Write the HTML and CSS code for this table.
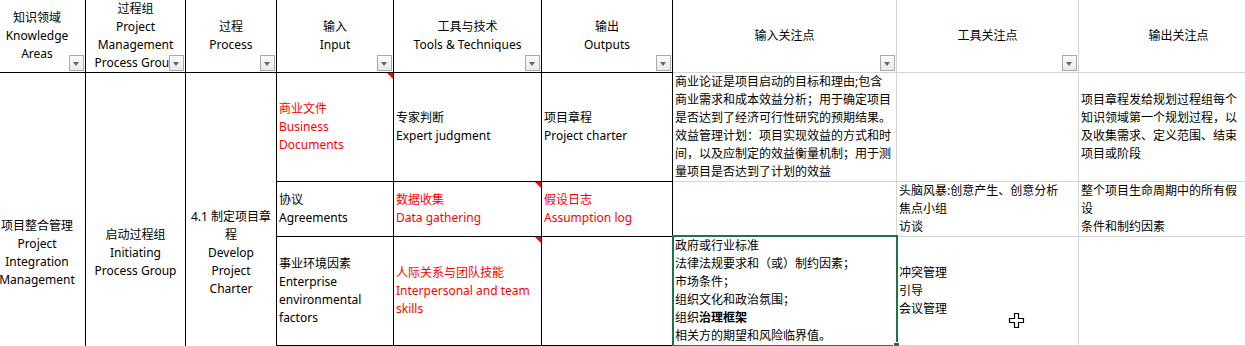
FILE: index.html
```html
<!DOCTYPE html>
<html lang="zh-CN">
<head>
<meta charset="utf-8">
<title>项目整合管理</title>
<link rel="stylesheet" href="styles.css">
</head>
<body>
<div class="sheet">
  <div class="cell head dark"><div class="txt">知识领域<br>Knowledge<br>Areas</div><span class="filter"></span></div>
  <div class="cell head dark"><div class="txt">过程组<br>Project<br>Management<br>Process Group</div><span class="filter"></span></div>
  <div class="cell head dark"><div class="txt">过程<br>Process</div><span class="filter"></span></div>
  <div class="cell head dark"><div class="txt">输入<br>Input</div><span class="filter"></span></div>
  <div class="cell head dark"><div class="txt">工具与技术<br>Tools &amp; Techniques</div><span class="filter"></span></div>
  <div class="cell head dark"><div class="txt">输出<br>Outputs</div><span class="filter"></span></div>
  <div class="cell head light"><div class="txt">输入关注点</div><span class="filter"></span></div>
  <div class="cell head light"><div class="txt">工具关注点</div><span class="filter"></span></div>
  <div class="cell head light"><div class="txt">输出关注点</div></div>

  <div class="cell merged"><div class="txt">项目整合管理<br>Project<br>Integration<br>Management</div></div>
  <div class="cell merged"><div class="txt">启动过程组<br>Initiating<br>Process Group</div></div>
  <div class="cell merged"><div class="txt">4.1 制定项目章<br>程<br>Develop<br>Project<br>Charter</div></div>

  <div class="cell body dark red note"><div class="txt">商业文件<br>Business<br>Documents</div></div>
  <div class="cell body dark"><div class="txt">专家判断<br>Expert judgment</div></div>
  <div class="cell body dark"><div class="txt">项目章程<br>Project charter</div></div>
  <div class="cell body light"><div class="txt">商业论证是项目启动的目标和理由;包含<br>商业需求和成本效益分析；用于确定项目<br>是否达到了经济可行性研究的预期结果。<br>效益管理计划：项目实现效益的方式和时<br>间，以及应制定的效益衡量机制；用于测<br>量项目是否达到了计划的效益</div></div>
  <div class="cell body light"></div>
  <div class="cell body light"><div class="txt">项目章程发给规划过程组每个<br>知识领域第一个规划过程，以<br>及收集需求、定义范围、结束<br>项目或阶段</div></div>

  <div class="cell body dark"><div class="txt">协议<br>Agreements</div></div>
  <div class="cell body dark red note"><div class="txt">数据收集<br>Data gathering</div></div>
  <div class="cell body dark red"><div class="txt">假设日志<br>Assumption log</div></div>
  <div class="cell body light"></div>
  <div class="cell body light"><div class="txt">头脑风暴:创意产生、创意分析<br>焦点小组<br>访谈</div></div>
  <div class="cell body light"><div class="txt">整个项目生命周期中的所有假<br>设<br>条件和制约因素</div></div>

  <div class="cell body dark"><div class="txt">事业环境因素<br>Enterprise<br>environmental<br>factors</div></div>
  <div class="cell body dark red note"><div class="txt">人际关系与团队技能<br>Interpersonal and team<br>skills</div></div>
  <div class="cell body dark"></div>
  <div class="cell body light selected"><div class="txt">政府或行业标准<br>法律法规要求和（或）制约因素；<br>市场条件；<br>组织文化和政治氛围；<br>组织<b>治理框架</b><br>相关方的期望和风险临界值。</div><span class="handle"></span></div>
  <div class="cell body light"><div class="txt">冲突管理<br>引导<br>会议管理</div></div>
  <div class="cell body light"></div>

  <div class="cell body dark"></div>
  <div class="cell body dark"></div>
  <div class="cell body dark"></div>
  <div class="cell body light"></div>
  <div class="cell body light"></div>
  <div class="cell body light"></div>
</div>
<svg class="cursor" width="17" height="17" viewBox="0 0 17 17" aria-hidden="true">
  <path d="M6.5 1.5h4v5h5v4h-5v5h-4v-5h-5v-4h5z" fill="#fff" stroke="#000" stroke-width="1.2"/>
</svg>
</body>
</html>
```

FILE: styles.css
```css
html, body {
  margin: 0;
  padding: 0;
  overflow: hidden;
  background: #fff;
}

body {
  font-family: "Noto Sans", "Noto Sans CJK SC", sans-serif;
  font-size: 12px;
  line-height: 18px;
  color: #000;
}

.sheet {
  display: grid;
  grid-template-columns: 97px 100px 91px 117px 148px 131px 224px 182px 200px;
  grid-template-rows: 73px 109px 55px 109px 86px;
  margin-left: -11px;
  width: 1290px;
}

.cell {
  box-sizing: border-box;
  position: relative;
  display: flex;
  flex-direction: column;
  justify-content: center;
  white-space: nowrap;
  border-right: 1px solid #000;
  border-bottom: 1px solid #000;
}

.cell.light {
  border-right-color: #d4d4d4;
  border-bottom-color: #d4d4d4;
}

.head,
.merged {
  text-align: center;
  align-items: center;
}

.merged {
  grid-row: span 4;
  border-bottom: none;
}

.body {
  align-items: flex-start;
  padding-left: 2px;
  text-align: left;
}

.txt b {
  font-weight: 700;
}

.red {
  color: #ff0000;
}

.note::before {
  content: "";
  position: absolute;
  top: 0;
  right: 0;
  width: 0;
  height: 0;
  border-top: 6px solid #ff0000;
  border-left: 6px solid transparent;
}

.filter {
  position: absolute;
  right: 1px;
  bottom: 1px;
  width: 15px;
  height: 16px;
  box-sizing: border-box;
  border: 1px solid #a9a9a9;
  background: linear-gradient(#fbfbfb, #e9e9e9);
}

.filter::after {
  content: "";
  position: absolute;
  left: 3px;
  top: 6px;
  width: 0;
  height: 0;
  border-left: 3.5px solid transparent;
  border-right: 3.5px solid transparent;
  border-top: 4px solid #666;
}

.selected::after {
  content: "";
  position: absolute;
  left: -1px;
  top: -2px;
  right: -2px;
  bottom: -2px;
  border: 2px solid #217346;
  pointer-events: none;
}

.handle {
  position: absolute;
  right: -4px;
  bottom: -4px;
  width: 5px;
  height: 5px;
  background: #217346;
  border: 1px solid #fff;
  z-index: 2;
}

.cursor {
  position: absolute;
  left: 1008px;
  top: 312px;
}
```
